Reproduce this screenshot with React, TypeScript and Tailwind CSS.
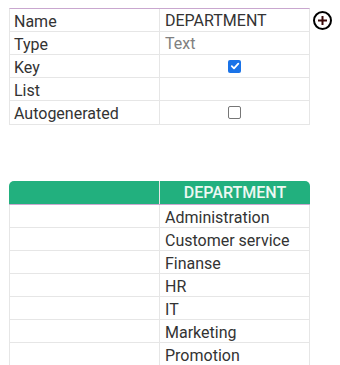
import React from "react";

const font = { fontFamily: "Roboto, 'Liberation Sans', sans-serif" };

function Row({ label, children, last }: { label: string; children?: React.ReactNode; last?: boolean }) {
  return (
    <div className={`flex h-[23px] ${last ? "" : "border-b border-[#e6e6e6]"}`}>
      <div className="w-[150px] border-r border-[#e6e6e6] pl-[4px] leading-[25px] text-[16px] text-[#333]">{label}</div>
      <div className="flex-1 flex items-center">{children}</div>
    </div>
  );
}

function CheckOn() {
  return (
    <div className="mx-auto w-[13px] h-[13px] rounded-[2px] bg-[#1a73e8] flex items-center justify-center">
      <svg width="10" height="10" viewBox="0 0 10 10">
        <path d="M1.8 5.2 L4 7.3 L8.3 2.6" stroke="white" strokeWidth="1.8" fill="none" strokeLinecap="round" strokeLinejoin="round" />
      </svg>
    </div>
  );
}

function CheckOff() {
  return <div className="mx-auto w-[13px] h-[13px] rounded-[2px] border border-[#767676] bg-white" />;
}

export default function App() {
  const items = ["Administration", "Customer service", "Finanse", "HR", "IT", "Marketing", "Promotion"];
  return (
    <div className="w-[340px] h-[365px] bg-white overflow-hidden relative" style={font}>
      <div className="pt-[8px] pl-[9px] flex items-start">
        <div className="w-[301px] border border-[#e6e6e6] border-t-[#c9a7cf]">
          <Row label="Name">
            <span className="pl-[5px] pt-[2px] text-[16px] text-[#333] leading-[22px]">DEPARTMENT</span>
          </Row>
          <Row label="Type">
            <span className="pl-[5px] pt-[2px] text-[16px] text-[#808080] leading-[22px]">Text</span>
          </Row>
          <Row label="Key">
            <CheckOn />
          </Row>
          <Row label="List" />
          <Row label="Autogenerated" last>
            <CheckOff />
          </Row>
        </div>
        <div className="ml-[3px] mt-[3px] w-[19px] h-[19px] rounded-full border-[2px] border-black flex items-center justify-center">
          <svg width="11" height="11" viewBox="0 0 11 11">
            <path d="M5.5 1 V10 M1 5.5 H10" stroke="#3a0a0a" strokeWidth="2" />
          </svg>
        </div>
      </div>

      <div className="mt-[56px] ml-[9px] w-[301px]">
        <div className="flex h-[24px] bg-[#22b07e] rounded-t-[5px] border-b border-[#c9a7cf]">
          <div className="w-[151px] border-r border-[#e6e6e6]" />
          <div className="flex-1 text-center text-[16px] font-medium text-[#eef8f3] leading-[24px]">DEPARTMENT</div>
        </div>
        <div className="border-l border-r border-[#e6e6e6]">
          {items.map((it) => (
            <div key={it} className="flex h-[23px] border-b border-[#e6e6e6]">
              <div className="w-[150px] border-r border-[#e6e6e6]" />
              <div className="flex-1 pl-[5px] text-[16px] text-[#333] leading-[25px]">{it}</div>
            </div>
          ))}
        </div>
      </div>
    </div>
  );
}
